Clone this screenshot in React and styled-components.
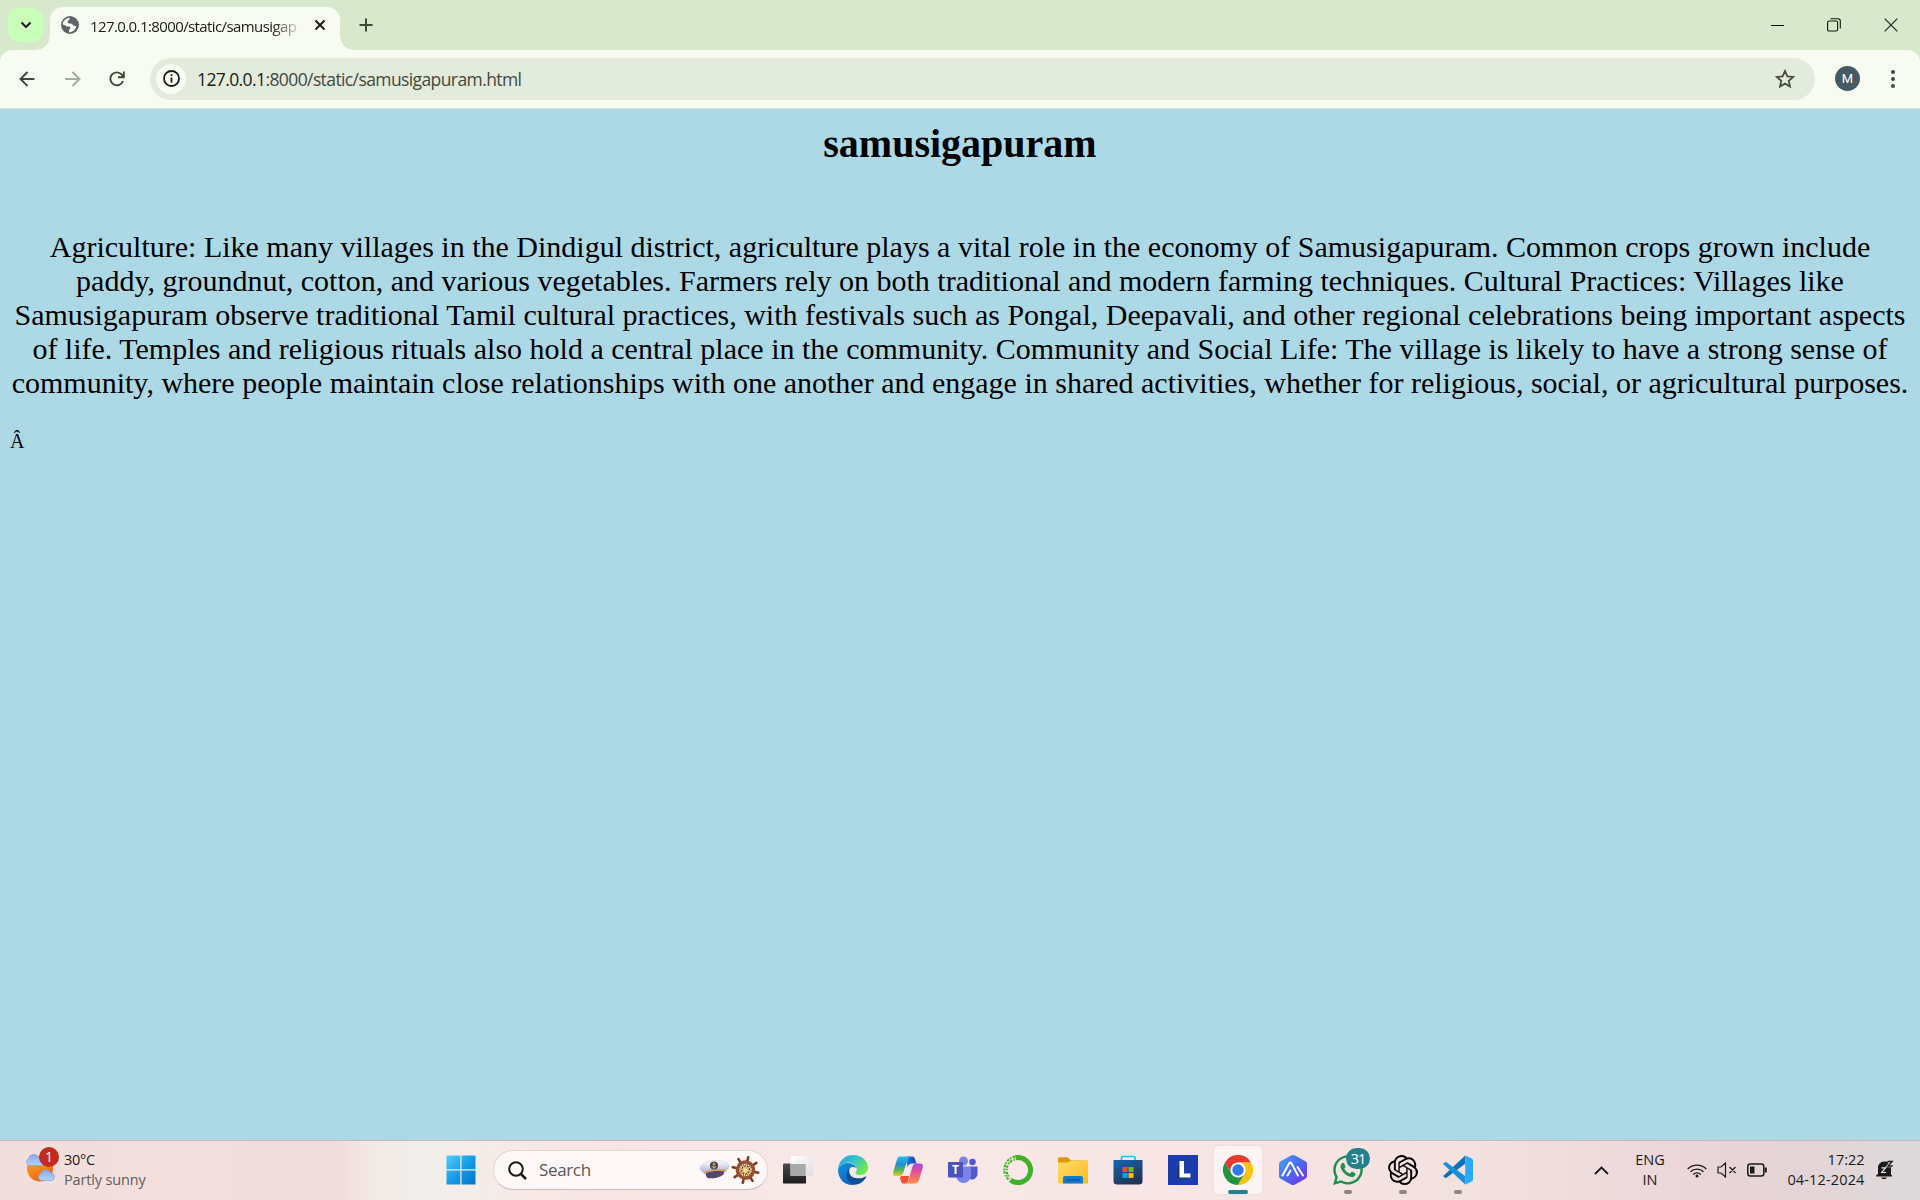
import React from 'react';
import styled, { createGlobalStyle, css } from 'styled-components';
import { SiOpenai } from 'react-icons/si';
import { FaWhatsapp } from 'react-icons/fa';

const uiFont = "'Open Sans', 'Noto Sans', sans-serif";

const GlobalStyle = createGlobalStyle`
  * { box-sizing: border-box; }
  html, body { margin: 0; padding: 0; overflow: hidden; }
  svg { display: block; flex: none; }
`;

const Screen = styled.div`
  width: 1920px;
  height: 1200px;
  display: flex;
  flex-direction: column;
  overflow: hidden;
  background: #d7e8cd;
  font-family: ${uiFont};
`;

const Label = styled.span`
  display: block;
  white-space: nowrap;
  font-size: ${p => p.$size}px;
  letter-spacing: ${p => p.$track || 0}px;
  color: ${p => p.$color || '#1a1c18'};
  line-height: ${p => p.$line || 20}px;
`;

/* ---------- tab strip ---------- */
const TabStrip = styled.header`
  height: 50px;
  flex: none;
  display: flex;
  background: #d7e8cd;
`;

const TabSearch = styled.button`
  width: 35px;
  height: 34px;
  margin: 8px 7px 0 8px;
  padding: 0;
  border: 0;
  border-radius: 11px;
  background: #c9ffb9;
  display: grid;
  place-items: center;
`;

const Tab = styled.div`
  position: relative;
  width: 290px;
  height: 43px;
  margin-top: 7px;
  padding: 0 12px 7px 11px;
  border-radius: 13px 13px 0 0;
  background: #f8fbf2;
  display: flex;
  align-items: center;
  &::before, &::after {
    content: '';
    position: absolute;
    bottom: 0;
    width: 14px;
    height: 14px;
  }
  &::before { left: -14px; background: radial-gradient(circle at 0 0, transparent 13.5px, #f8fbf2 14px); }
  &::after { right: -14px; background: radial-gradient(circle at 100% 0, transparent 13.5px, #f8fbf2 14px); }
`;

const TabTitle = styled.div`
  width: 214px;
  margin-left: 11px;
  padding-top: 1px;
  mask-image: linear-gradient(to right, #000 182px, transparent 214px);
`;

const TabClose = styled.div`
  margin-left: auto;
  width: 16px;
  display: grid;
  place-items: center;
`;

const NewTab = styled.div`
  width: 51px;
  height: 50px;
  display: grid;
  place-items: center;
`;

const WindowControls = styled.div`
  margin-left: auto;
  display: grid;
  grid-template-columns: 56px 56px 58px;
  place-items: center;
`;

/* ---------- toolbar ---------- */
const Toolbar = styled.nav`
  height: 59px;
  flex: none;
  display: flex;
  align-items: center;
  padding: 0 14px 1px 0;
  border-bottom: 1px solid #dfe6d9;
  border-radius: 12px 12px 0 0;
  background: #f8fbf2;
`;

const NavButtons = styled.div`
  width: 150px;
  display: grid;
  grid-template-columns: 45px 45px;
  grid-auto-flow: column;
  grid-auto-columns: 45px;
  place-items: center;
  padding-left: 5px;
`;

const Omnibox = styled.div`
  width: 1665px;
  height: 42px;
  border-radius: 21px;
  background: #e2ebdc;
  display: flex;
  align-items: center;
  padding: 0 20px 0 6px;
`;

const SiteInfo = styled.div`
  width: 30px;
  height: 30px;
  border-radius: 50%;
  background: #f8fbf2;
  display: grid;
  place-items: center;
  margin-right: 11px;
`;

const StarSlot = styled.div`
  margin-left: auto;
`;

const Avatar = styled.div`
  width: 25px;
  height: 25px;
  margin-left: 20px;
  border-radius: 50%;
  background: #455a64;
  color: #fff;
  font: 400 13px/25px Roboto, sans-serif;
  text-align: center;
`;

const MenuDots = styled.div`
  margin-left: auto;
  width: 26px;
  display: grid;
  place-items: center;
`;

/* ---------- web page ---------- */
const Page = styled.main`
  flex: 1;
  min-height: 0;
  padding: 12px 10px 0;
  background: #add8e6;
  color: #000;
  font-family: 'Liberation Serif', serif;
`;

const Heading = styled.h1`
  margin: 0;
  font-size: 40px;
  line-height: 46px;
  font-weight: bold;
  text-align: center;
`;

const Article = styled.p`
  margin: 63px 0 0;
  font-size: 30px;
  line-height: 34px;
  text-align: center;
  white-space: nowrap;
`;

const Stray = styled.p`
  margin: 30px 0 0;
  font-size: 20px;
  line-height: 23px;
`;

/* ---------- taskbar ---------- */
const Taskbar = styled.footer`
  height: 60px;
  flex: none;
  display: flex;
  align-items: stretch;
  padding-bottom: 1px;
  border-top: 1px solid #c6b6b7;
  background: linear-gradient(90deg, #f2dfdd 0, #f2dede 340px, #f2eae7 375px, #f2efeb 430px, #f6e9e6 520px, #f9e4e4 620px, #f8e8e8 830px, #f8e6e6 1160px, #f3e1df 1490px, #ead5d8 1700px, #e5d4d7 1800px, #dddada 1920px);
`;

const Weather = styled.section`
  width: 433px;
  padding-left: 24px;
  display: flex;
  align-items: center;
  gap: 4px;
`;

const WeatherArt = styled.div`
  position: relative;
  width: 36px;
  height: 44px;
`;

const Badge = styled.span`
  position: absolute;
  display: grid;
  place-items: center;
  border-radius: 50%;
  color: #fff;
  ${p => p.$kind === 'alert'
    ? css`width: 20px; height: 20px; left: 15px; top: -1px; background: #c42b1c; font-size: 14px; line-height: 20px;`
    : css`width: 24px; height: 21px; left: 26px; top: 7px; border-radius: 11px; background: #24808c; font-size: 14.5px; letter-spacing: -1px; line-height: 20px;`}
`;

const Lines = styled.div`
  display: flex;
  flex-direction: column;
  align-items: ${p => p.$align || 'flex-start'};
`;

const Slot = styled.div`
  position: relative;
  width: 55px;
  display: grid;
  place-items: center;
`;

const ActiveTile = styled.div`
  width: 48px;
  height: 48px;
  border-radius: 5px;
  background: #fcf5f4;
  box-shadow: 0 0 1px 1px #eddedf;
  display: grid;
  place-items: center;
`;

const Running = styled.i`
  position: absolute;
  left: 50%;
  bottom: 5px;
  width: ${p => (p.$active ? 20 : 8)}px;
  height: 4px;
  margin-left: ${p => (p.$active ? -10 : -4)}px;
  border-radius: 2px;
  background: ${p => (p.$active ? '#24808c' : '#8f8484')};
`;

const SearchBox = styled.div`
  width: 275px;
  height: 40px;
  align-self: center;
  margin: 0 2px 0 5px;
  padding: 0 6px 0 14px;
  border: 1px solid #e5d5d5;
  border-bottom-color: #c9bcbc;
  border-radius: 20px;
  background: #fdf8f7;
  display: flex;
  align-items: center;
  gap: 12px;
`;

const SearchArt = styled.div`
  margin-left: auto;
`;

const Tray = styled.section`
  margin-left: auto;
  padding-right: 26px;
  display: flex;
  align-items: center;
`;

const TrayItem = styled.div`
  margin-left: ${p => p.$gap || 0}px;
  width: ${p => p.$w}px;
  display: flex;
  justify-content: center;
`;

/* ---------- drawings ---------- */
const Stroke = ({ w, h, vb, c = '#1b1c1a', sw = 1.5, children }) => (
  <svg width={w} height={h} viewBox={vb || `0 0 ${w} ${h}`} fill="none" stroke={c} strokeWidth={sw}>{children}</svg>
);

const Globe = () => (
  <svg width="18" height="18" viewBox="0 0 18 18">
    <circle cx="9" cy="9" r="9" fill="#5f6368" />
    <path d="M1.600 8.600C1.900 5 4.600 2.300 8.500 1.800L8.600 3.600 6.900 5 6.700 7 8.600 7.600 11.200 7.800 12 9.600 15.200 10.200C14.800 13.500 12 16.200 8 16.200L8.200 13.600 9.700 12 8.400 10.500 5.600 10.600 3.500 8.900z" fill="#f8fbf2" />
  </svg>
);

const WeatherIcon = () => (
  <svg width="36" height="44" viewBox="0 0 36 44">
    <defs>
      <linearGradient id="sun" x1="0" y1="0" x2=".5" y2="1"><stop stopColor="#f5b52c" /><stop offset="1" stopColor="#ee6414" /></linearGradient>
      <linearGradient id="cloud" x1="0" y1="0" x2="0" y2="1"><stop stopColor="#86a9ea" /><stop offset="1" stopColor="#b4d2fb" /></linearGradient>
    </defs>
    <circle cx="16" cy="20.500" r="13" fill="url(#sun)" />
    <path d="M5 17.500A4 4 0 0 1 4.500 10.500 5.500 5.500 0 0 1 14.500 9L20 17.500z" fill="url(#cloud)" stroke="#7f9fdf" strokeWidth=".7" />
    <path d="M17 32.500A3.700 3.700 0 0 1 17 25.500a5 5 0 0 1 9.500-.5 3.800 3.800 0 0 1 1 7.500z" fill="url(#cloud)" stroke="#7f9fdf" strokeWidth=".7" />
  </svg>
);

const StartIcon = () => (
  <svg width="30" height="30" viewBox="0 0 30 30">
    <defs><linearGradient id="win" x1="0" y1="0" x2="30" y2="30" gradientUnits="userSpaceOnUse"><stop stopColor="#4fd2ff" /><stop offset=".5" stopColor="#189be6" /><stop offset="1" stopColor="#0670cd" /></linearGradient></defs>
    <path d="M.5.5h13.800v13.800H.5zM15.500.5h14v13.800h-14zM.5 15.500h13.800v14H.5zM15.500 15.500h14v14h-14z" fill="url(#win)" />
  </svg>
);

const spokes = [0, 45, 90, 135, 180, 225, 270, 315];
const HatAndWheel = () => (
  <svg width="62" height="30" viewBox="0 0 62 30">
    <defs><linearGradient id="cap" x1="0" y1="0" x2="0" y2="1"><stop stopColor="#fff" /><stop offset="1" stopColor="#aaa4d6" /></linearGradient></defs>
    <path d="M1 12C4 8 10 5.500 16 5.500c6 0 12 1.500 14 4.500.5 2-1 5-4 7L6 19C3 17 0 14 1 12z" fill="url(#cap)" stroke="#cfcbe4" strokeWidth=".6" />
    <path d="M7 18c5-2 13-2.500 18.500-1.500l-1 3c-4 3.500-12 4.500-16 3.500-1.500-1.500-2-3-1.500-5z" fill="#544769" />
    <path d="M5.500 17.500c6-2.500 14-3.500 21-2" stroke="#d39b38" strokeWidth="1.600" fill="none" />
    <circle cx="15" cy="10.500" r="4" fill="#41405f" />
    <path d="M15 7.500v6M12.800 11q2.200 4 4.400 0M13.500 9h3" stroke="#ddb450" fill="none" />
    <g transform="translate(46.500 15) rotate(12)" stroke="#7a3b20" fill="none">
      {spokes.map(a => <path key={a} d="M0-4V-13" transform={`rotate(${a})`} strokeWidth="2.600" strokeLinecap="round" />)}
      <circle r="8" strokeWidth="3.600" stroke="#96502d" />
      <circle r="4" fill="#efc05b" stroke="#6b341e" strokeWidth="1.200" />
      {spokes.map(a => <path key={a} d="M0-3V-6.500" transform={`rotate(${a})`} stroke="#f4d8a0" strokeWidth="1.200" />)}
      <circle r="1.500" fill="#fff1cc" stroke="none" />
    </g>
  </svg>
);

const TaskView = () => (
  <svg width="30" height="30" viewBox="0 0 30 30">
    <defs>
      <linearGradient id="tvd" x1="0" y1="0" x2="0" y2="1"><stop stopColor="#4a4a4a" /><stop offset="1" stopColor="#1c1c1c" /></linearGradient>
      <linearGradient id="tvl" x1="0" y1="0" x2="1" y2="1"><stop stopColor="#fff" /><stop offset="1" stopColor="#dedede" /></linearGradient>
    </defs>
    <rect x="0" y="8.500" width="23" height="20" rx="1" fill="url(#tvd)" />
    <rect x="7.500" y="1" width="22.500" height="20" rx="1" fill="url(#tvl)" />
    <path d="M7.500 9h15.200v12H7.500z" fill="#a9a9a9" />
  </svg>
);

const Edge = () => (
  <svg width="30" height="30" viewBox="0 0 30 30">
    <defs>
      <linearGradient id="eg" x1="0" y1="0" x2="1" y2=".6"><stop stopColor="#1e9fdc" /><stop offset=".5" stopColor="#33c3cf" /><stop offset="1" stopColor="#75e84a" /></linearGradient>
      <linearGradient id="eb" x1="0" y1="0" x2=".6" y2="1"><stop stopColor="#1690df" /><stop offset="1" stopColor="#0b64c4" /></linearGradient>
    </defs>
    <path d="M0 14C.8 6 7 0 15 0c9 0 15 6 15 12.500 0 4.500-3 7.500-7.500 7.500-4 0-5.500-1.500-5-2.500 1-1.300 1.500-2.300 1.300-4C18.300 10 14 7.500 10 7.500c-5 0-8.500 3-10 6.500z" fill="url(#eg)" />
    <path d="M0 14.500C1.500 10.500 5 8 9.500 8c4 0 8 2 9 5-4-2.500-8-.5-8.500 4.500-.5 6 4 11.500 10 10.500-2 1.500-4 2-6 2C6 30 0 23.500 0 14.500z" fill="url(#eb)" />
    <path d="M12 13c-2 3-.5 9 5.500 10 4 .8 7 .3 10-1.500.8-.3 1 .3.500 1C25.500 26.500 22.500 29 18.500 29.500 12 29.500 8 24.500 8.500 19.500 8.800 16.500 10 14.300 12 13z" fill="#104d94" />
  </svg>
);

const Copilot = () => (
  <svg width="30" height="28" viewBox="0 0 30 28">
    <defs>
      <linearGradient id="ca" x1="0" y1="0" x2="0" y2="1"><stop stopColor="#27bdf0" /><stop offset=".4" stopColor="#248fd0" /><stop offset=".7" stopColor="#55b35c" /><stop offset="1" stopColor="#f2cc18" /></linearGradient>
      <linearGradient id="cb" x1="0" y1="0" x2="0" y2="1"><stop stopColor="#a548e5" /><stop offset=".45" stopColor="#e8538f" /><stop offset="1" stopColor="#ff944c" /></linearGradient>
      <linearGradient id="cc" x1="0" y1="0" x2="1" y2="0"><stop stopColor="#1787e7" /><stop offset="1" stopColor="#153db2" /></linearGradient>
    </defs>
    <path d="M13 .5h6c2.500 0 3 2 3.700 5l.8 2h-4c-3 0-4 1-5 4z" fill="url(#cc)" />
    <path d="M8 20h8l-1 5c-.8 2-2 2.500-4 2.500-2.500 0-3-2-4-5.500z" fill="#f4512e" />
    <path d="M7 .5h11c-2 0-3 1.500-4 5L10.500 16c-1 3-2 4-4 4H3c-3 0-3.500-2-2.500-5L4 3.500C4.800 1.300 5.500.5 7 .5z" fill="url(#ca)" />
    <path d="M23 7.500h4c3 0 3.500 2 2.500 5L26 24c-.8 2.500-2 3.500-4 3.500H11c3 0 4-2 5-5L19 12c1-3.500 2-4.500 4-4.500z" fill="url(#cb)" />
  </svg>
);

const LetterOnTile = styled.text`
  font-family: 'Open Sans', sans-serif;
  font-weight: 700;
`;

const Teams = () => (
  <svg width="30" height="28" viewBox="0 0 30 28">
    <circle cx="15.500" cy="5" r="4.500" fill="#7b83eb" /><circle cx="24.500" cy="6" r="3.300" fill="#5059c9" />
    <path d="M21 10.500h8.500v8a5.500 5.500 0 0 1-8.500 4z" fill="#5059c9" />
    <path d="M8 10.500h15v9a7.500 7.500 0 0 1-15 0z" fill="#7b83eb" />
    <rect x="0" y="6" width="15" height="15.500" rx="1" fill="#4b53bc" />
    <LetterOnTile x="7.500" y="18" fontSize="12" textAnchor="middle" fill="#fff">T</LetterOnTile>
  </svg>
);

const Anaconda = () => (
  <svg width="30" height="30" viewBox="0 0 30 30" fill="none" stroke="#43b02a">
    <path d="M12.500 2.800A12.500 12.500 0 1 1 7.500 25" strokeWidth="5" />
    <path d="M12 1.500A13.600 13.600 0 0 0 6.500 25.500" strokeWidth="2" strokeDasharray="2.600 1.400 1.600 1" />
    <path d="M12 4.500A11 11 0 0 0 7 23" strokeWidth="2" strokeDasharray="1.500 1.500 2.500 1" />
  </svg>
);

const Folder = () => (
  <svg width="30" height="27" viewBox="0 0 30 27">
    <defs><linearGradient id="fo" x1="0" y1="0" x2="1" y2="1"><stop stopColor="#ffdc6b" /><stop offset="1" stopColor="#fcb91d" /></linearGradient></defs>
    <path d="M0 1.500Q0 .3 1.500.3h8L13 3.500h16q1 0 1 1.500v6H0z" fill="#dc9b0c" />
    <path d="M0 5.500h9.500L13 3.700h17v21.800q0 1-1 1H1q-1 0-1-1z" fill="url(#fo)" />
    <path d="M5 26.500V21q0-2 2-2h16q2 0 2 2v5.500z" fill="#117bd1" /><path d="M8.500 23h13" stroke="#0a4c8c" strokeWidth="1.200" />
  </svg>
);

const Store = () => (
  <svg width="30" height="30" viewBox="0 0 30 30">
    <defs><linearGradient id="st" x1="0" y1="0" x2=".5" y2="1"><stop stopColor="#1368b3" /><stop offset="1" stopColor="#213556" /></linearGradient></defs>
    <path d="M8.500 6V3q0-1.500 1.500-1.500h10.500Q22 1.500 22 3v3" fill="none" stroke="#30b9f2" strokeWidth="1.700" />
    <path d="M.5 5h29v21q0 3.500-3.500 3.500H4Q.5 29.500.5 26z" fill="url(#st)" />
    <path d="M9.500 12h5v5h-5z" fill="#f25022" /><path d="M15.500 12h5v5h-5z" fill="#7fba00" /><path d="M9.500 18h5v5h-5z" fill="#00a4ef" /><path d="M15.500 18h5v5h-5z" fill="#ffb900" />
  </svg>
);

const LTile = () => (
  <svg width="30" height="30" viewBox="0 0 30 30">
    <rect width="30" height="30" fill="#1c3bae" />
    <path d="M11.500 6L8.500 23.500 20 24.500 13 20z" fill="#123e63" />
    <path d="M11.500 6h4.500v12.500h6.500v4h-11z" fill="#fff" />
  </svg>
);

const Chrome = () => (
  <svg width="30" height="30" viewBox="0 0 30 30">
    <path d="M2 7.500A15 15 0 0 1 28 7.500H15A7.500 7.500 0 0 0 8.500 18.800z" fill="#e33b2e" />
    <path d="M28 7.500A15 15 0 0 1 15 30L21.500 18.800A7.500 7.500 0 0 0 15 7.500z" fill="#fdc110" />
    <path d="M15 30A15 15 0 0 1 2 7.500L8.500 18.800A7.500 7.500 0 0 0 21.500 18.800z" fill="#229342" />
    <circle cx="15" cy="15" r="7.200" fill="#fff" /><circle cx="15" cy="15" r="5.700" fill="#3079ec" />
  </svg>
);

const HexPeaks = () => (
  <svg width="28" height="30" viewBox="0 0 28 30">
    <defs><linearGradient id="hx" x1="0" y1="0" x2="1" y2="1"><stop stopColor="#4aa3f2" /><stop offset=".5" stopColor="#4b68ee" /><stop offset="1" stopColor="#7a2bf0" /></linearGradient></defs>
    <path d="M12 .5q2-1 4 0L26 6q2 1 2 3v12q0 2-2 3l-10 5.500q-2 1-4 0L2 24q-2-1-2-3V9q0-2 2-3z" fill="url(#hx)" />
    <path d="M3.500 20.500L10 8.500q1.300-2 2.600 0L19 20.500M8.500 20.500l3-5M18.500 12l5.500 8.500" fill="none" stroke="#fff" strokeWidth="2" strokeLinecap="round" strokeLinejoin="round" />
  </svg>
);

const VSCode = () => (
  <svg width="30" height="30" viewBox="0 0 30 30">
    <path d="M1 20.300L22 .7V9L3.500 22.700q-.7.4-1.300 0L.4 21.600q-.7-.7.6-1.300z" fill="#0f72b8" />
    <path d="M1 9.700L22 29.300V21L3.500 7.300q-.7-.4-1.300 0L.4 8.400q-.7.700.6 1.300z" fill="#178fd9" />
    <path d="M21.800.2l7 3.200q1.200.6 1.200 2v19.200q0 1.400-1.200 2l-7 3.200q.4-.5.4-1.800V2q0-1.300-.4-1.800z" fill="#2aaaf4" />
  </svg>
);

const Wifi = () => (
  <Stroke w={20} h={15} sw={1.400}>
    <path d="M.7 6a13.200 13.200 0 0 1 18.600 0M3.500 8.800a9.200 9.200 0 0 1 13 0M6.200 11.400a5.400 5.400 0 0 1 7.600 0" />
    <circle cx="10" cy="13" r="1.500" fill="#1b1c1a" stroke="none" />
  </Stroke>
);

const Muted = () => (
  <Stroke w={20} h={16} sw={1.200}><path d="M1 5h3l4.500-4v14L4 11H1zM12.500 5l6 6m0-6l-6 6" /></Stroke>
);

const Battery = () => (
  <Stroke w={20} h={14} sw={1.500}><rect x=".8" y="1" width="16" height="12" rx="2.500" /><rect x="3" y="3.500" width="4.500" height="7" fill="#1b1c1a" stroke="none" /><path d="M18.700 4.500v5" strokeWidth="2.200" /></Stroke>
);

const Bell = () => (
  <svg width="18" height="20" viewBox="0 0 18 20">
    <path d="M2 8a6 6 0 0 1 6-6.500h4.500V7H15v8h1v1.500H.3V15L2 14zM5 17.500h6q-.8 1.800-3 1.800t-3-1.800z" fill="#1b1c1a" />
    <path d="M5.500 7.800h4L5.800 12.500h4.300" fill="none" stroke="#f2e8ea" strokeWidth="1.200" />
    <path d="M11.800 1.500h4.400L12 6h4.700" fill="none" stroke="#e3d6d8" strokeWidth="2.600" /><path d="M11.800 1.500h4.400L12 6h4.700" fill="none" stroke="#1b1c1a" strokeWidth="1.300" />
  </svg>
);

const apps = [
  { id: 'taskview', Icon: TaskView },
  { id: 'edge', Icon: Edge },
  { id: 'copilot', Icon: Copilot },
  { id: 'teams', Icon: Teams },
  { id: 'anaconda', Icon: Anaconda },
  { id: 'files', Icon: Folder },
  { id: 'store', Icon: Store },
  { id: 'l', Icon: LTile },
  { id: 'chrome', Icon: Chrome, active: true },
  { id: 'peaks', Icon: HexPeaks },
  { id: 'whatsapp', Icon: () => <FaWhatsapp size={34} color="#1f8f50" />, running: true, badge: '31' },
  { id: 'chatgpt', Icon: () => <SiOpenai size={30} color="#050505" />, running: true },
  { id: 'vscode', Icon: VSCode, running: true },
];

const article = [
  'Agriculture: Like many villages in the Dindigul district, agriculture plays a vital role in the economy of Samusigapuram. Common crops grown include',
  'paddy, groundnut, cotton, and various vegetables. Farmers rely on both traditional and modern farming techniques. Cultural Practices: Villages like',
  'Samusigapuram observe traditional Tamil cultural practices, with festivals such as Pongal, Deepavali, and other regional celebrations being important aspects',
  'of life. Temples and religious rituals also hold a central place in the community. Community and Social Life: The village is likely to have a strong sense of',
  'community, where people maintain close relationships with one another and engage in shared activities, whether for religious, social, or agricultural purposes.',
];

const UrlPath = styled.span`
  color: #44483f;
`;

export default function App() {
  return (
    <Screen>
      <GlobalStyle />
      <TabStrip>
        <TabSearch><Stroke w={12} h={8} sw={2.100}><path d="M1.500 1.500L6 6l4.500-4.500" /></Stroke></TabSearch>
        <Tab>
          <Globe />
          <TabTitle><Label $size={15} $track={-0.6}>127.0.0.1:8000/static/samusigap</Label></TabTitle>
          <TabClose><Stroke w={12} h={12} sw={2}><path d="M1.500 1.500l9 9m0-9l-9 9" /></Stroke></TabClose>
        </Tab>
        <NewTab><Stroke w={14} h={14} sw={2} c="#3c4b37"><path d="M7 .5v13M.5 7h13" /></Stroke></NewTab>
        <WindowControls>
          <Stroke w={14} h={13} sw={1} c="#000"><path d="M0 6.500h13" /></Stroke>
          <Stroke w={14} h={14} sw={1.100} c="#111"><rect x=".6" y="3" width="10" height="10" rx="1.500" /><path d="M3.500.8H11Q13.300.8 13.300 3v7.500" /></Stroke>
          <Stroke w={14} h={14} sw={1.200} c="#222"><path d="M.7.7l12.600 12.600m0-12.600L.7 13.300" /></Stroke>
        </WindowControls>
      </TabStrip>

      <Toolbar>
        <NavButtons>
          <Stroke w={17} h={16} sw={1.900} c="#3c4b37"><path d="M15.500 8H1.500M8.500 1L1.500 8l7 7" /></Stroke>
          <Stroke w={16} h={16} sw={1.900} c="#a4aa9f"><path d="M0 8h14.500M7.500 1l7 7-7 7" /></Stroke>
          <Stroke w={17} h={16} sw={1.900} c="#3c4b37"><path d="M14 10a6.500 6.500 0 1 1-1.200-6.400L14.500 5.500M14.800.5v5.800H9" /></Stroke>
        </NavButtons>
        <Omnibox>
          <SiteInfo><Stroke w={17} h={17} sw={1.800}><circle cx="8.500" cy="8.500" r="7.500" /><path d="M8.500 7.500v5M8.500 4.300v1.800" /></Stroke></SiteInfo>
          <Label $size={17.5} $track={-0.6} $line={24}>127.0.0.1<UrlPath>:8000/static/samusigapuram.html</UrlPath></Label>
          <StarSlot><Stroke w={20} h={19} sw={1.800} c="#454c42"><path d="M10 2l2.400 5.300 5.700.6-4.300 3.900 1.200 5.700-5-2.900-5 2.900 1.200-5.700L1.900 7.900l5.700-.6z" /></Stroke></StarSlot>
        </Omnibox>
        <Avatar>M</Avatar>
        <MenuDots><svg width="4" height="18" viewBox="0 0 4 18" fill="#3c4b37"><circle cx="2" cy="2" r="2" /><circle cx="2" cy="9" r="2" /><circle cx="2" cy="16" r="2" /></svg></MenuDots>
      </Toolbar>

      <Page>
        <Heading>samusigapuram</Heading>
        <Article>{article.map((line, i) => <React.Fragment key={i}>{i > 0 && <br />}{line}</React.Fragment>)}</Article>
        <Stray>Â</Stray>
      </Page>

      <Taskbar>
        <Weather>
          <WeatherArt><WeatherIcon /><Badge $kind="alert">1</Badge></WeatherArt>
          <Lines><Label $size={14.5} $track={-0.3}>30°C</Label><Label $size={14.5} $track={-0.15} $color="#635c5b">Partly sunny</Label></Lines>
        </Weather>
        <Slot><StartIcon /></Slot>
        <SearchBox>
          <Stroke w={19} h={19} sw={2}><circle cx="8" cy="8" r="6.800" /><path d="M13 13l5 5" strokeWidth="2.500" /></Stroke>
          <Label $size={17} $track={-0.35} $color="#5e5958" $line={24}>Search</Label>
          <SearchArt><HatAndWheel /></SearchArt>
        </SearchBox>
        {apps.map(({ id, Icon, active, running, badge }) => (
          <Slot key={id}>
            {active ? <ActiveTile><Icon /></ActiveTile> : <Icon />}
            {badge && <Badge>{badge}</Badge>}
            {(active || running) && <Running $active={active} />}
          </Slot>
        ))}
        <Tray>
          <TrayItem $w={16}><Stroke w={15} h={9} sw={1.800}><path d="M1 8l6.500-6.500L14 8" /></Stroke></TrayItem>
          <TrayItem $w={30} $gap={26}><Lines $align="center"><Label $size={14.5}>ENG</Label><Label $size={14.5}>IN</Label></Lines></TrayItem>
          <TrayItem $w={20} $gap={22}><Wifi /></TrayItem>
          <TrayItem $w={20} $gap={10}><Muted /></TrayItem>
          <TrayItem $w={20} $gap={10}><Battery /></TrayItem>
          <TrayItem $w={78} $gap={20}><Lines $align="flex-end"><Label $size={14.5}>17:22</Label><Label $size={14.5} $track={0.15}>04-12-2024</Label></Lines></TrayItem>
          <TrayItem $w={18} $gap={11}><Bell /></TrayItem>
        </Tray>
      </Taskbar>
    </Screen>
  );
}
